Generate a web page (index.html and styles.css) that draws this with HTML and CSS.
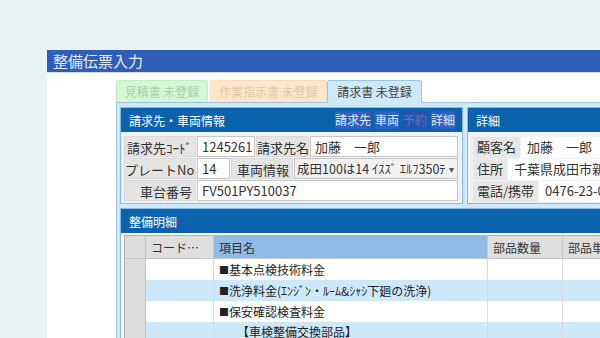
FILE: index.html
```html
<!DOCTYPE html>
<html lang="ja">
    <head>
        <!-- CABECERA "整備伝票入力" -->
        <meta charset="UTF-8" />
        <meta name="viewport" content="width=device-width, initial-scale=1.0" />
        <title>整備伝票入力</title>
        <link rel="stylesheet" href="styles.css">
    </head>
    <body>
        <!-- VENTANA -->
        <div class="ventana">
            <div class="barra-titulo">整備伝票入力</div>

            <div class="cuerpo-ventana">
                <!-- PESTAÑAS -->
                <div class="pestanas">
                    <div class="pestana pestana-verde">見積書 未登録</div>
                    <div class="pestana pestana-naranja">作業指示書 未登録</div>
                    <div class="pestana pestana-activa">請求書 未登録</div>
                </div>

                <div class="panel">
                    <div class="fila-grupos">
                        <!-- 請求先・車両情報 -->
                        <div class="grupo grupo-cliente">
                            <div class="grupo-cabecera">
                                <span>請求先・車両情報</span>
                                <div class="botones">
                                    <span class="boton">請求先</span>
                                    <span class="boton">車両</span>
                                    <span class="boton boton-inactivo">予約</span>
                                    <span class="boton">詳細</span>
                                </div>
                            </div>
                            <div class="formulario">
                                <div class="fila">
                                    <div class="etiqueta ancho-72">請求先ｺｰﾄﾞ</div>
                                    <div class="campo ancho-58">1245261</div>
                                    <div class="etiqueta ancho-53">請求先名</div>
                                    <div class="campo flexible">加藤　一郎</div>
                                </div>
                                <div class="fila">
                                    <div class="etiqueta ancho-72">プレートNo</div>
                                    <div class="campo ancho-33">14</div>
                                    <div class="etiqueta ancho-62">車両情報</div>
                                    <div class="campo selector flexible">
                                        <span class="selector-texto">成田100は14 ｲｽｽﾞ ｴﾙﾌ350ﾃﾞ</span>
                                        <span class="flecha">▾</span>
                                    </div>
                                </div>
                                <div class="fila">
                                    <div class="etiqueta ancho-72">車台番号</div>
                                    <div class="campo flexible">FV501PY510037</div>
                                </div>
                            </div>
                        </div>

                        <!-- 詳細 -->
                        <div class="grupo grupo-detalle">
                            <div class="grupo-cabecera">
                                <span>詳細</span>
                            </div>
                            <div class="formulario formulario-detalle">
                                <div class="fila">
                                    <div class="etiqueta-detalle">顧客名</div>
                                    <div class="valor">加藤　一郎</div>
                                </div>
                                <div class="fila">
                                    <div class="etiqueta-detalle">住所</div>
                                    <div class="valor">千葉県成田市新泉14-3</div>
                                </div>
                                <div class="fila">
                                    <div class="etiqueta-detalle">電話/携帯</div>
                                    <div class="valor">0476-23-0000</div>
                                </div>
                            </div>
                        </div>
                    </div>

                    <!-- 整備明細 -->
                    <div class="grupo grupo-meisai">
                        <div class="grupo-cabecera">
                            <span>整備明細</span>
                        </div>
                        <div class="contenedor-tabla">
                            <table class="tabla">
                                <colgroup>
                                    <col class="col-fila" />
                                    <col class="col-codigo" />
                                    <col class="col-nombre" />
                                    <col class="col-cantidad" />
                                    <col class="col-precio" />
                                </colgroup>
                                <tr>
                                    <th class="encabezado-fila"></th>
                                    <th>コード…</th>
                                    <th class="ordenado">項目名</th>
                                    <th>部品数量</th>
                                    <th>部品単価</th>
                                </tr>
                                <tr>
                                    <td class="encabezado-fila"></td>
                                    <td></td>
                                    <td><span class="cuadro">■</span>基本点検技術料金</td>
                                    <td></td>
                                    <td></td>
                                </tr>
                                <tr class="alterna">
                                    <td class="encabezado-fila"></td>
                                    <td></td>
                                    <td><span class="cuadro">■</span>洗浄料金(ｴﾝｼﾞﾝ・ﾙｰﾑ&amp;ｼｬｼ下廻の洗浄)</td>
                                    <td></td>
                                    <td></td>
                                </tr>
                                <tr>
                                    <td class="encabezado-fila"></td>
                                    <td></td>
                                    <td><span class="cuadro">■</span>保安確認検査料金</td>
                                    <td></td>
                                    <td></td>
                                </tr>
                                <tr class="alterna">
                                    <td class="encabezado-fila"></td>
                                    <td></td>
                                    <td>　　【車検整備交換部品】</td>
                                    <td></td>
                                    <td></td>
                                </tr>
                            </table>
                        </div>
                    </div>
                </div>
            </div>
        </div>
    </body>
</html>
```

FILE: styles.css
```css
/* ESTILOS "整備伝票入力" */
* {
    box-sizing: border-box;
    margin: 0;
    padding: 0;
}

html,
body {
    height: 100%;
    overflow: hidden;
}

body {
    font-family: "Noto Sans CJK JP", "Noto Sans", sans-serif;
    font-size: 13px;
    color: #333;
    background: #e6f4f6;
}

/* VENTANA */
.ventana {
    width: 600px;
    height: 300px;
    margin: 50px 0 0 47px;
    background: white;
}

.barra-titulo {
    height: 23px;
    padding-left: 6px;
    font-size: 15px;
    line-height: 22px;
    color: #e6ecf8;
    background: #2e5eb8;
    border-bottom: 1px solid #d3dbe8;
}

.cuerpo-ventana {
    padding: 7px 0 0 69px;
}

/* PESTAÑAS */
.pestanas {
    display: flex;
    align-items: flex-end;
    height: 22px;
}

.pestana {
    height: 22px;
    font-size: 12px;
    line-height: 21px;
    text-align: center;
    border: 1px solid transparent;
    border-bottom: none;
    border-radius: 3px 3px 0 0;
}

.pestana-verde {
    width: 92px;
    margin-right: 2px;
    color: #a9cfa9;
    background: #d4f8d4;
    border-color: #c4ecc4;
}

.pestana-naranja {
    width: 117px;
    color: #e3c7a4;
    background: #fde6cc;
    border-color: #f3dcc0;
}

.pestana-activa {
    position: relative;
    z-index: 1;
    width: 95px;
    height: 23px;
    margin-bottom: -1px;
    color: #444;
    background: #cde9fb;
    border-color: #9cc4e4;
}

/* PANEL */
.panel {
    height: 240px;
    padding: 4px 0 0 3px;
    background: #cde9fb;
    border: 1px solid #9cc4e4;
}

.fila-grupos {
    display: flex;
    gap: 4px;
}

.grupo {
    background: #f2f2f2;
    border: 1px solid #86b9e6;
}

.grupo-cliente {
    width: 343px;
}

.grupo-detalle {
    flex: 1;
}

.grupo-meisai {
    margin-top: 4px;
    height: 140px;
    background: white;
}

.grupo-cabecera {
    display: flex;
    align-items: center;
    height: 24px;
    padding: 0 7px 0 8px;
    font-size: 12px;
    color: white;
    background: #0b62ad;
}

.botones {
    display: flex;
    gap: 4px;
    margin-left: auto;
}

.boton {
    height: 18px;
    line-height: 18px;
    color: #e3eafb;
    background: #2f62c0;
}

.boton-inactivo {
    color: #5676bb;
    background: #2b51b0;
}

/* FORMULARIO */
.formulario {
    display: flex;
    flex-direction: column;
    gap: 1px;
    padding: 4px 4px 1px 3px;
}

.fila {
    display: flex;
    gap: 1px;
    height: 21px;
}

.etiqueta {
    padding-right: 3px;
    line-height: 21px;
    text-align: right;
    white-space: nowrap;
    background: #e4e4e4;
    border: 1px solid #dadada;
}

.campo {
    padding-left: 4px;
    line-height: 19px;
    white-space: nowrap;
    overflow: hidden;
    color: #333;
    background: white;
    border: 1px solid #c6c6c6;
}

.selector {
    display: flex;
    padding-left: 2px;
    background: #f1f1f1;
}

.selector-texto {
    flex: 1;
    overflow: hidden;
    font-size: 12.5px;
}

.flecha {
    width: 12px;
    font-size: 10px;
    text-align: center;
    color: #555;
}

.ancho-72 { width: 72px; }
.ancho-58 { width: 58px; }
.ancho-53 { width: 53px; }
.ancho-33 { width: 33px; }
.ancho-62 { width: 62px; }

.flexible {
    flex: 1;
}

.formulario-detalle {
    padding: 5px 0 1px 5px;
}

.etiqueta-detalle {
    padding: 0 4px;
    line-height: 20px;
    white-space: nowrap;
    background: #e6e6e6;
}

.valor {
    flex: 1;
    padding-left: 6px;
    line-height: 20px;
    white-space: nowrap;
    overflow: hidden;
    background: white;
}

/* TABLA */
.contenedor-tabla {
    padding: 2px 0 0 3px;
}

.tabla {
    width: 600px;
    table-layout: fixed;
    border-collapse: collapse;
    font-size: 12px;
    color: #222;
    border: 1px solid #b0b0b0;
}

.col-fila { width: 21px; }
.col-codigo { width: 68px; }
.col-nombre { width: 274px; }
.col-cantidad { width: 75px; }
.col-precio { width: 162px; }

.tabla th {
    height: 23px;
    padding-left: 5px;
    font-weight: normal;
    text-align: left;
    white-space: nowrap;
    color: #333;
    background: #dedede;
    border-right: 1px solid #c6c6c6;
    border-bottom: 1px solid #c6c6c6;
}

.tabla th.ordenado {
    background: #8fbbe6;
}

.tabla td {
    height: 21px;
    padding-left: 5px;
    white-space: nowrap;
    overflow: hidden;
    background: white;
    border-right: 1px solid #dadada;
}

.cuadro {
    font-size: 10px;
    vertical-align: 1px;
}

.tabla tr.alterna td {
    background: #cde8fb;
}

.tabla .encabezado-fila,
.tabla tr.alterna .encabezado-fila {
    background: #dcdcdc;
    border-right: 1px solid #c2c2c2;
}
```
